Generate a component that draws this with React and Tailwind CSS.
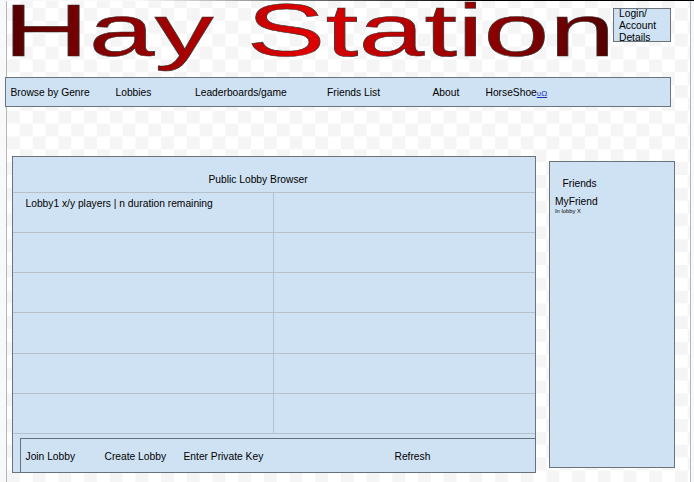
const navItems = [
  { label: 'Browse by Genre', width: 'w-[105px]' },
  { label: 'Lobbies', width: 'w-[79.5px]' },
  { label: 'Leaderboards/game', width: 'w-[132px]' },
  { label: 'Friends List', width: 'w-[105.5px]' },
  { label: 'About', width: 'w-[53px]' },
];

const lobbies = [
  'Lobby1 x/y players | n duration remaining', '',
  '', '',
  '', '',
  '', '',
  '', '',
  '', '',
];

function Title() {
  return (
    <svg className="block h-[76px] w-[607px] shrink-0 overflow-visible" viewBox="6 1 607 76">
      <defs>
        <linearGradient id="hay" gradientUnits="userSpaceOnUse" x1="4" y1="0" x2="386" y2="38">
          <stop offset="0" stopColor="#580000" />
          <stop offset="0.48" stopColor="#e00000" />
          <stop offset="1" stopColor="#4c0000" />
        </linearGradient>
      </defs>
      <text
        transform="translate(3.2 55.6) scale(1.6 1)"
        fontFamily="Liberation Sans, Arial, sans-serif"
        fontSize="74"
        fill="url(#hay)"
        stroke="#333"
        strokeWidth="0.55"
      >
        Hay Station
      </text>
    </svg>
  );
}

export default function App() {
  return (
    <div className="h-[482px] w-[694px] bg-[#f8f9fb] pl-[6px] font-['Liberation_Sans',Arial,sans-serif] text-[10.25px] leading-[12px] text-black">
      <div className="-ml-[6px] h-px bg-linear-to-r from-[#f8f9fb] from-20% via-[#555] via-50% to-black to-75%" />
      <div className="h-[481px] w-[685px] border-x border-[#b7b7b7] bg-[conic-gradient(#fff_25%,#f5f5f5_0_50%,#fff_0_75%,#f5f5f5_0)] bg-size-[25.7px_25.7px] bg-position-[0px_7px]">
        <header className="-ml-px flex h-[76px]">
          <Title />
          <div className="mt-[7px] h-[34px] w-[58px] shrink-0 border border-[#6b747d] bg-[#cfe2f3] pl-[5px]">
            <div className="-mt-px">Login/<br />Account<br />Details</div>
          </div>
        </header>

        <nav className="-ml-[2px] flex h-[30px] w-[666px] items-center whitespace-nowrap border border-[#6b747d] bg-[#cfe2f3] pl-[4.5px] pt-[2px]">
          {navItems.map((item) => (
            <a key={item.label} className={`${item.width} h-[12px] shrink-0`}>{item.label}</a>
          ))}
          <a className="h-[12px]">HorseShoe<span className="text-[8px] leading-none text-[#1c2fb8] underline">υΩ</span></a>
        </nav>

        <main className="flex pl-[5px] pt-[49px]">
          <section className="h-[317px] w-[524px] border border-[#6b747d] bg-[#cfe2f3]">
            <h1 className="h-[35px] pl-[195.5px] pt-[17px]">Public Lobby Browser</h1>
            <div className="grid grid-cols-[260px_262px] auto-rows-[40.15px] border-b border-[#b5c0ca]">
              {lobbies.map((lobby, i) => (
                <div key={i} className="border-t border-[#b5c0ca] pl-[12.5px] pt-[5px] even:border-l">{lobby}</div>
              ))}
            </div>
            <div className="-mr-px ml-[6.5px] mt-[4px] flex h-[35px] items-center border border-[#65707a] pl-[5px] pt-[3px]">
              <button className="w-[79px] text-left">Join Lobby</button>
              <button className="w-[79px] text-left">Create Lobby</button>
              <button className="w-[211px] text-left">Enter Private Key</button>
              <button>Refresh</button>
            </div>
          </section>

          <aside className="ml-[13px] mt-[5px] h-[307px] w-[126px] border border-[#6b747d] bg-[#cfe2f3] pl-[5px] pt-[16px]">
            <h2 className="pl-[7.5px]">Friends</h2>
            <p className="pt-[6px]">MyFriend</p>
            <p className="text-[5.8px] leading-[7px]">In lobby X</p>
          </aside>
        </main>
      </div>
    </div>
  );
}
